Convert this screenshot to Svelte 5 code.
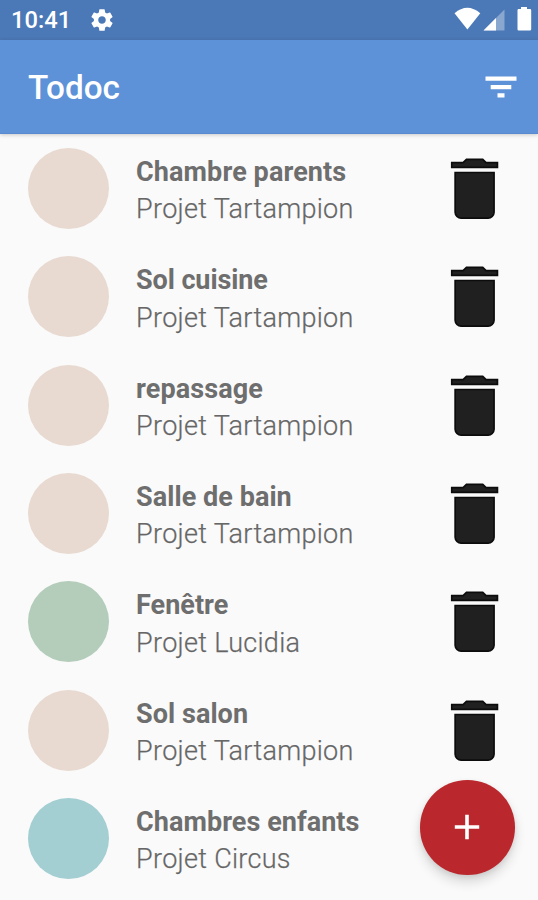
<script>
  const tasks = [
    { name: 'Chambre parents', project: 'Projet Tartampion', color: '#e8dad1', spacing: 0.1 },
    { name: 'Sol cuisine', project: 'Projet Tartampion', color: '#e8dad1', spacing: -0.1 },
    { name: 'repassage', project: 'Projet Tartampion', color: '#e8dad1', spacing: 0.1 },
    { name: 'Salle de bain', project: 'Projet Tartampion', color: '#e8dad1', spacing: 0.05 },
    { name: 'Fenêtre', project: 'Projet Lucidia', color: '#b4cdba', spacing: 0 },
    { name: 'Sol salon', project: 'Projet Tartampion', color: '#e8dad1', spacing: 0.05 },
    { name: 'Chambres enfants', project: 'Projet Circus', color: '#a3ced2', spacing: 0.05 }
  ];
</script>

<div class="screen">
  <div class="status">
    <span class="time">10:41</span>
    <svg class="gear" width="26" height="26" viewBox="0 0 24 24" fill="#fff">
      <path d="M19.43 12.98c.04-.32.07-.64.07-.98s-.03-.66-.07-.98l2.11-1.65c.19-.15.24-.42.12-.64l-2-3.46c-.12-.22-.39-.3-.61-.22l-2.49 1c-.52-.4-1.08-.73-1.69-.98l-.38-2.65C14.46 2.18 14.25 2 14 2h-4c-.25 0-.46.18-.49.42l-.38 2.65c-.61.25-1.17.59-1.69.98l-2.49-1c-.23-.09-.49 0-.61.22l-2 3.46c-.13.22-.07.49.12.64l2.11 1.65c-.04.32-.07.65-.07.98s.03.66.07.98l-2.11 1.65c-.19.15-.24.42-.12.64l2 3.46c.12.22.39.3.61.22l2.49-1c.52.4 1.08.73 1.69.98l.38 2.65c.03.24.24.42.49.42h4c.25 0 .46-.18.49-.42l.38-2.65c.61-.25 1.17-.59 1.69-.98l2.49 1c.23.09.49 0 .61-.22l2-3.46c.12-.22.07-.49-.12-.64l-2.11-1.65zM12 15.5c-1.93 0-3.5-1.57-3.5-3.5s1.57-3.5 3.5-3.5 3.5 1.57 3.5 3.5-1.57 3.5-3.5 3.5z" />
    </svg>
    <svg class="system" width="84" height="39" viewBox="0 0 84 39">
      <path d="M0.5 13.200Q13.300 2.200 26.300 13.200L13.400 29.500Z" fill="#fff" />
      <path d="M50.500 9.500V30.500H29.500Z" fill="#fff" opacity=".35" />
      <path d="M42 18V30.500H29.500Z" fill="#fff" />
      <path d="M67 7h6v2h3q1.200 0 1.200 1.200V29.300q0 1.200-1.200 1.200H64.700q-1.200 0-1.200-1.200V10.200Q63.500 9 64.700 9H67z" fill="#fff" />
    </svg>
  </div>
  <header>
    <h1>Todoc</h1>
    <svg class="filter" width="32" height="22" viewBox="0 0 32 22" fill="#fff">
      <path d="M.5 .5h31v4.300H.5zM5.700 9h20.600v4.200H5.700zM12.500 17.300h7v4.200h-7z" />
    </svg>
  </header>
  <main>
    {#each tasks as task}
      <div class="row">
        <span class="dot" style:background={task.color}></span>
        <div class="text">
          <div class="name" style:letter-spacing={`${task.spacing}px`}>{task.name}</div>
          <div class="project">{task.project}</div>
        </div>
        <svg class="trash" width="81.2" height="81.2" viewBox="0 0 24 24" fill="#202020" stroke="#0c0c0c" stroke-width=".5">
          <path d="M6.250 7.250h11.500V19c0 .9-.85 1.750-1.750 1.750H8c-.9 0-1.750-.85-1.750-1.750z" />
          <path d="M18.750 4.350v1.400H5.250v-1.400h3.350l1-1h4.800l1 1z" />
        </svg>
      </div>
    {/each}
  </main>
  <button class="fab" aria-label="+">
    <svg width="26" height="26" viewBox="0 0 26 26"><path d="M13 .8v24.400M.8 13h24.400" stroke="#fff" stroke-width="3.600" /></svg>
  </button>
</div>

<style>
  .screen {
    position: relative;
    width: 538px;
    height: 900px;
    overflow: hidden;
    background: #fafafa;
    font-family: Roboto, sans-serif;
  }
  .status {
    height: 39.500px;
    background: #4b78b6;
    display: flex;
    align-items: center;
    padding: 0 0 0 11px;
    box-sizing: border-box;
  }
  .time {
    width: 78px;
    font-size: 23.700px;
    font-weight: 500;
    line-height: 39px;
    color: #fff;
    padding-top: 2px;
  }
  .gear { margin-top: 1px; }
  .system { margin-left: auto; }
  header {
    height: 94.800px;
    box-sizing: border-box;
    background: #5d91d8;
    display: flex;
    align-items: center;
    justify-content: space-between;
    padding: 1px 21px 0 28px;
    box-shadow: 0 1px 4px rgba(0, 0, 0, .2);
    border-bottom: 1px solid #578acf;
  }
  h1 {
    margin: 0;
    padding-top: 3px;
    font-size: 33.300px;
    font-weight: 500;
    line-height: 42px;
    color: #fff;
  }
  .row {
    height: 108.330px;
    box-sizing: border-box;
    display: flex;
    align-items: center;
    padding: 0 23.300px 0 27.500px;
  }
  .dot {
    width: 81.200px;
    height: 81.200px;
    border-radius: 50%;
  }
  .text {
    margin-left: 27.400px;
    padding-top: 5.500px;
    flex: 1;
    font-size: 27px;
    line-height: 37.200px;
    white-space: nowrap;
  }
  .name { font-weight: 700; color: #6e6e6e; }
  .project { font-weight: 300; color: #646464; letter-spacing: .3px; -webkit-text-stroke: .25px #707070; }
  .fab {
    position: absolute;
    left: 420px;
    top: 780px;
    width: 94.500px;
    height: 94.500px;
    border: 0;
    padding: 0;
    border-radius: 50%;
    background: #ba282d;
    display: flex;
    align-items: center;
    justify-content: center;
    box-shadow: 0 7px 12px rgba(0, 0, 0, .14), 0 2px 5px rgba(0, 0, 0, .08);
  }
</style>
